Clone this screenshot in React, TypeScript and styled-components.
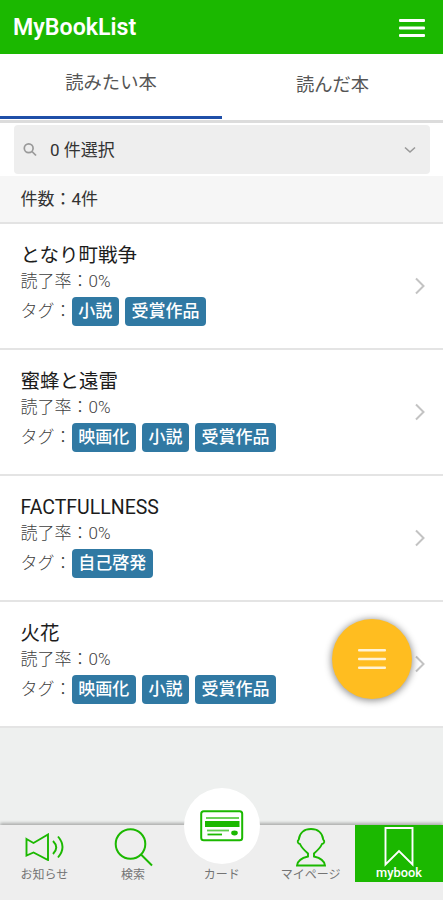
import React from "react";
import styled, { createGlobalStyle, css } from "styled-components";

const GREEN = "#1bb800";

const GlobalStyle = createGlobalStyle`
  *, *::before, *::after { box-sizing: border-box; }
  body {
    margin: 0;
    background: #eef0ef;
    font-family: Roboto, "Noto Sans CJK JP", sans-serif;
    -webkit-font-smoothing: antialiased;
  }
  button { font: inherit; border: 0; padding: 0; background: none; }
  svg { display: block; }
`;

const Screen = styled.div`
  position: relative;
  display: flex;
  flex-direction: column;
  height: 900px;
  overflow: hidden;
`;

const Header = styled.header`
  display: flex;
  align-items: center;
  justify-content: space-between;
  flex: none;
  height: 54px;
  padding: 1px 18px 0 13px;
  background: ${GREEN};
  color: #fff;
`;

const AppTitle = styled.h1`
  margin: 0;
  font-size: 23.2px;
  font-weight: 600;
  line-height: 53px;
`;

const Tabs = styled.nav`
  display: grid;
  grid-template-columns: 222px 1fr;
  flex: none;
  height: 69px;
  background: #fff;
  border-bottom: 3px solid #dcdcdc;
`;

const Tab = styled.button<{ $active?: boolean }>`
  height: 65px;
  color: #555;
  font-size: 18.3px;
  font-weight: 400;
  line-height: 26px;
  padding-bottom: 3px;
  ${(p) =>
    p.$active &&
    css`
      padding-bottom: 5px;
      border-bottom: 3px solid #1f4fa8;
    `}
`;

const FilterBar = styled.div`
  flex: none;
  height: 53px;
  padding: 2px 13px 2px 14px;
  background: #fff;
`;

const Filter = styled.button`
  display: flex;
  align-items: center;
  width: 100%;
  height: 49px;
  padding: 0 13px 0 9px;
  border-radius: 4px;
  background: #eee;
  color: #333;
  font-size: 17px;
`;

const FilterLabel = styled.span`
  flex: 1;
  margin-left: 12px;
  padding-bottom: 3px;
  text-align: left;
`;

const Count = styled.div`
  flex: none;
  height: 48px;
  padding-left: 20.5px;
  background: #f6f6f6;
  border-bottom: 2px solid #e3e3e3;
  color: #333;
  font-size: 17px;
  line-height: 46px;
`;

const List = styled.ul`
  margin: 0;
  padding: 0;
  list-style: none;
  background: #fff;
`;

const Row = styled.li`
  display: flex;
  align-items: center;
  justify-content: space-between;
  height: 126px;
  padding: 0 17px 0 20.5px;
  border-bottom: 2px solid #e4e4e4;
`;

const RowBody = styled.div`
  height: 126px;
  padding-top: 19px;
`;

const BookTitle = styled.h2`
  margin: 0;
  height: 24px;
  color: #1c1c1c;
  font-size: 19.5px;
  font-weight: 400;
  line-height: 28px;
`;

const Detail = styled.div`
  display: flex;
  align-items: center;
  height: 26px;
  color: #404040;
  font-size: 17px;
  font-weight: 300;
`;

const TagLine = styled(Detail)`
  height: 38px;
  gap: 6.5px;
`;

const TagLabel = styled.span`
  margin-right: -6px;
  padding-bottom: 4px;
`;

const Tag = styled.span`
  height: 29px;
  padding: 0 6.3px;
  border-radius: 4px;
  background: #3079a3;
  color: #fff;
  font-size: 17px;
  font-weight: 500;
  line-height: 28px;
`;

const FloatingMenu = styled.button`
  position: absolute;
  left: 332px;
  top: 619px;
  display: grid;
  place-items: center;
  width: 80px;
  height: 80px;
  border-radius: 50%;
  background: #ffbd20;
  box-shadow: 0 1px 7px 1px rgba(0, 0, 0, 0.42);
`;

const BottomNav = styled.nav`
  display: grid;
  grid-template-columns: repeat(4, 88.75px) 1fr;
  flex: none;
  height: 75px;
  margin-top: auto;
  background: #eee;
  box-shadow: 0 -2px 3px 0 rgba(0, 0, 0, 0.28);
`;

const NavItem = styled.a<{ $active?: boolean }>`
  display: flex;
  flex-direction: column;
  align-items: center;
  height: 57px;
  background: ${(p) => (p.$active ? GREEN : "transparent")};
  color: ${(p) => (p.$active ? "#fff" : GREEN)};
`;

const NavLabel = styled.span<{ $active?: boolean }>`
  flex: none;
  height: 16px;
  margin-top: ${(p) => (p.$active ? -2 : 0)}px;
  color: ${(p) => (p.$active ? "#fff" : "#747474")};
  font-size: ${(p) => (p.$active ? 12.8 : 12)}px;
  font-weight: ${(p) => (p.$active ? 500 : 400)};
  line-height: 16px;
  white-space: nowrap;
`;

const NavIcon = styled.span`
  display: grid;
  place-items: center;
  flex: none;
  height: 42px;
  padding-top: 2px;
`;

const CardCircle = styled.span`
  display: grid;
  place-items: center;
  flex: none;
  width: 76px;
  height: 76px;
  margin-top: -37px;
  margin-bottom: 3px;
  border-radius: 50%;
  background: #fff;
`;

const Bars = ({ width, gap, weight }: { width: number; gap: number; weight: number }) => (
  <svg width={width} height={gap * 2 + weight} fill="currentColor">
    {[0, 1, 2].map((i) => (
      <rect key={i} y={i * gap} width={width} height={weight} rx="1" />
    ))}
  </svg>
);

const FabBars = styled.span`
  color: #fff3d5;
`;

const Magnifier = () => (
  <svg width="15" height="15" fill="none" stroke="#999" strokeWidth="1.7">
    <circle cx="5.7" cy="6.2" r="4.4" />
    <path d="m9 9.5 4 4" />
  </svg>
);

const ChevronDown = () => (
  <svg width="13" height="8" fill="none" stroke="#999" strokeWidth="1.6">
    <path d="m1 1.5 5 4.5 5-4.5" />
  </svg>
);

const ChevronRight = () => (
  <svg width="12" height="18" fill="none" stroke="#c3c3c3" strokeWidth="2">
    <path d="m2 1.5 7.5 7.5L2 16.5" />
  </svg>
);

const Speaker = () => (
  <svg width="40" height="28" fill="none" stroke="currentColor" strokeWidth="1.9">
    <path d="M2.5 6 9.5 10 24 1.5V27L9.5 19.5 2.5 22.5Z" />
    <path d="M29 8q6.5 6.5 0 13M34 3.5q9 10.5 0 21" />
  </svg>
);

const Search = () => (
  <svg width="40" height="40" fill="none" stroke="currentColor" strokeWidth="2">
    <circle cx="17.5" cy="17" r="14.8" />
    <path d="m28 27.5 11 11" />
  </svg>
);

const Card = () => (
  <svg width="44" height="32" fill="none" stroke="currentColor">
    <rect x="1.2" y="1.2" width="41" height="29" rx="2.5" strokeWidth="2" />
    <path d="M6 8h33" strokeWidth="2.2" opacity=".65" />
    <path d="M5 14h34.5" strokeWidth="6" />
    <path d="M7 20.5h22" strokeWidth="1.8" opacity=".7" />
    <path d="M7.5 24.5h14.5" strokeWidth="1.8" />
    <ellipse cx="34.5" cy="23" rx="3.3" ry="2.4" fill="currentColor" stroke="none" />
  </svg>
);

const Person = () => (
  <svg width="32" height="40" fill="none" stroke="currentColor" strokeWidth="1.9">
    <path d="M13 26.5C9.5 23.5 6.5 20.5 5 17 2.5 16.5 2 14 3.8 12.5 4.5 5.5 9.5 2 16 2s11.5 3.5 12.2 10.5c1.8 1.5 1.3 4-1.2 4.5-1.5 3.5-4.5 6.5-8 9.500v3c6.5 1.5 10.5 4 11 9H2c.5-5 4.5-7.5 11-9Z" />
  </svg>
);

const Bookmark = () => (
  <svg width="30" height="40" fill="none" stroke="currentColor" strokeWidth="1.9">
    <path d="M1.5 1h27V37.500L15 24 1.5 37.500Z" />
  </svg>
);

const books = [
  { title: "となり町戦争", tags: ["小説", "受賞作品"] },
  { title: "蜜蜂と遠雷", tags: ["映画化", "小説", "受賞作品"] },
  { title: "FACTFULLNESS", tags: ["自己啓発"] },
  { title: "火花", tags: ["映画化", "小説", "受賞作品"] },
];

export default function App() {
  return (
    <>
      <GlobalStyle />
      <Screen lang="ja">
        <Header>
          <AppTitle>MyBookList</AppTitle>
          <Bars width={26} gap={7.5} weight={3} />
        </Header>
        <Tabs>
          <Tab $active>読みたい本</Tab>
          <Tab>読んだ本</Tab>
        </Tabs>
        <FilterBar>
          <Filter>
            <Magnifier />
            <FilterLabel>0 件選択</FilterLabel>
            <ChevronDown />
          </Filter>
        </FilterBar>
        <Count>件数：4件</Count>
        <List>
          {books.map((book) => (
            <Row key={book.title}>
              <RowBody>
                <BookTitle>{book.title}</BookTitle>
                <Detail>読了率：0%</Detail>
                <TagLine>
                  <TagLabel>タグ：</TagLabel>
                  {book.tags.map((tag) => (
                    <Tag key={tag}>{tag}</Tag>
                  ))}
                </TagLine>
              </RowBody>
              <ChevronRight />
            </Row>
          ))}
        </List>
        <BottomNav>
          <NavItem>
            <NavIcon><Speaker /></NavIcon>
            <NavLabel>お知らせ</NavLabel>
          </NavItem>
          <NavItem>
            <NavIcon><Search /></NavIcon>
            <NavLabel>検索</NavLabel>
          </NavItem>
          <NavItem>
            <CardCircle><Card /></CardCircle>
            <NavLabel>カード</NavLabel>
          </NavItem>
          <NavItem>
            <NavIcon><Person /></NavIcon>
            <NavLabel>マイページ</NavLabel>
          </NavItem>
          <NavItem $active>
            <NavIcon><Bookmark /></NavIcon>
            <NavLabel $active>mybook</NavLabel>
          </NavItem>
        </BottomNav>
        <FloatingMenu aria-label="メニュー">
          <FabBars><Bars width={28} gap={8.7} weight={2.6} /></FabBars>
        </FloatingMenu>
      </Screen>
    </>
  );
}
